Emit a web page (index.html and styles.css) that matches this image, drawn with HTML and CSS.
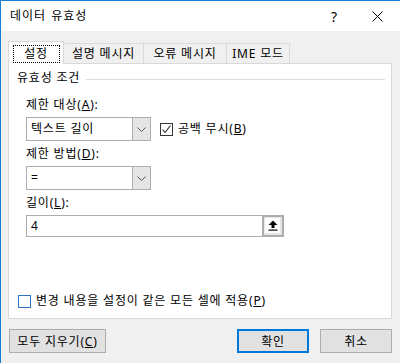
FILE: index.html
```html
<!DOCTYPE html>
<html lang="ko">
  <head>
    <meta charset="UTF-8" />
    <title>데이터 유효성</title>
    <meta name="viewport" content="width=device-width, initial-scale=1.0" />
    <link rel="stylesheet" href="styles.css">
  </head>
  <body>
    <div class="dialog">
      <div class="titlebar">
        <div class="title">데이터 유효성</div>
        <div class="help">?</div>
        <div class="close">
          <svg width="11" height="11" viewBox="0 0 11 11">
            <path d="M0.5 0.5 L10.5 10.5 M10.5 0.5 L0.5 10.5" stroke="#000" stroke-width="1" fill="none" />
          </svg>
        </div>
      </div>

      <div class="body">
        <div class="tabs">
          <div class="tab active"><span class="focus">설정</span></div>
          <div class="tab tab-help">설명 메시지</div>
          <div class="tab tab-error">오류 메시지</div>
          <div class="tab tab-ime">IME 모드</div>
        </div>

        <div class="panel">
          <div class="group-title">
            <span>유효성 조건</span>
            <div class="group-line"></div>
          </div>

          <div class="fields">
            <div class="label">제한 대상(<u>A</u>):</div>
            <div class="row">
              <div class="combo">
                <div class="combo-value">텍스트 길이</div>
                <div class="combo-btn">
                  <svg width="9" height="5" viewBox="0 0 9 5">
                    <path d="M0.5 0.5 L4.5 4.5 L8.5 0.5" stroke="#555" stroke-width="1" fill="none" />
                  </svg>
                </div>
              </div>
              <label class="check">
                <span class="box">
                  <svg width="11" height="11" viewBox="0 0 11 11">
                    <path d="M1.5 5.5 L4 8.5 L9.5 1.5" stroke="#222" stroke-width="1.1" fill="none" />
                  </svg>
                </span>
                공백 무시(<u>B</u>)
              </label>
            </div>

            <div class="label">제한 방법(<u>D</u>):</div>
            <div class="combo">
              <div class="combo-value">=</div>
              <div class="combo-btn">
                <svg width="9" height="5" viewBox="0 0 9 5">
                  <path d="M0.5 0.5 L4.5 4.5 L8.5 0.5" stroke="#555" stroke-width="1" fill="none" />
                </svg>
              </div>
            </div>

            <div class="label">길이(<u>L</u>):</div>
            <div class="ref-input">
              <div class="ref-value">4</div>
              <div class="ref-btn">
                <span class="ref-inner">
                  <svg width="10" height="11" viewBox="0 0 10 11">
                    <path d="M5 0.5 L9.5 5 L6.5 5 L6.5 8 L3.5 8 L3.5 5 L0.5 5 Z" fill="#000" />
                    <rect x="0.5" y="9.5" width="9" height="1.2" fill="#000" />
                  </svg>
                </span>
              </div>
            </div>
          </div>

          <label class="check apply">
            <span class="box blue"></span>
            변경 내용을 설정이 같은 모든 셀에 적용(<u>P</u>)
          </label>
        </div>

        <div class="buttons">
          <button class="btn clear-btn">모두 지우기(<u>C</u>)</button>
          <div class="spacer"></div>
          <button class="btn ok-btn">확인</button>
          <button class="btn">취소</button>
        </div>
      </div>
    </div>
  </body>
</html>
```

FILE: styles.css
```css
body {
  margin: 0;
  font-family: "Noto Sans", "Noto Sans CJK KR", sans-serif;
  font-size: 12px;
  letter-spacing: 0.8px;
  color: #000;
  background-color: #f0f0f0;
}
.dialog {
  width: 400px;
  height: 363px;
  box-sizing: border-box;
  border-top: 1px solid #1a7fd4;
  border-left: 1px solid #1a7fd4;
  display: flex;
  flex-direction: column;
  background-color: #f0f0f0;
  overflow: hidden;
}
.titlebar {
  height: 30px;
  background-color: #fff;
  display: flex;
  align-items: center;
  padding-left: 9px;
}
.title {
  flex: 1;
  line-height: 16px;
  letter-spacing: 1px;
  word-spacing: 1px;
}
.help {
  font-size: 14px;
  width: 10px;
  margin-right: 31px;
}
.close {
  width: 11px;
  height: 11px;
  margin-right: 17px;
  margin-top: 1px;
}
.close svg {
  display: block;
}
.body {
  flex: 1;
  padding: 10px 8px 0 7px;
  display: flex;
  flex-direction: column;
}
.tabs {
  display: flex;
  align-items: flex-end;
  height: 22px;
  position: relative;
  z-index: 1;
}
.tab {
  height: 20px;
  box-sizing: border-box;
  border: 1px solid #d9d9d9;
  border-bottom: none;
  margin-left: -1px;
  display: flex;
  align-items: center;
  justify-content: center;
  line-height: 16px;
  background-color: #f0f0f0;
}
.tab.active {
  height: 23px;
  width: 56px;
  margin-left: 0;
  background-color: #fff;
  margin-bottom: -1px;
}
.tab .focus {
  display: flex;
  align-items: center;
  justify-content: center;
  width: 47px;
  height: 18px;
  border: 1px dotted #000;
  box-sizing: border-box;
  margin-top: 1px;
}
.tab-help {
  width: 81px;
}
.tab-error {
  width: 84px;
}
.tab-ime {
  width: 64px;
}
.panel {
  height: 256px;
  box-sizing: border-box;
  background-color: #fff;
  border: 1px solid #d9d9d9;
  padding: 6px 6px 9px 8px;
  display: flex;
  flex-direction: column;
}
.group-title {
  display: flex;
  align-items: center;
  line-height: 16px;
}
.group-line {
  flex: 1;
  height: 1px;
  background-color: #dcdcdc;
  margin-left: 6px;
  margin-top: 2px;
}
.fields {
  padding-left: 9px;
  margin-top: 11px;
}
.label {
  line-height: 16px;
  margin-bottom: 4px;
}
.row {
  display: flex;
  align-items: center;
}
.combo {
  width: 125px;
  height: 24px;
  box-sizing: border-box;
  border: 1px solid #adadad;
  display: flex;
  margin-bottom: 5px;
}
.combo-value {
  flex: 1;
  padding-left: 4px;
  line-height: 22px;
}
.combo-btn {
  width: 17px;
  border-left: 1px solid #adadad;
  background-color: #e5e5e5;
  display: flex;
  align-items: center;
  justify-content: center;
}
.combo-btn svg {
  display: block;
}
.check {
  display: flex;
  align-items: center;
  line-height: 16px;
}
.row .check {
  margin-left: 9px;
  margin-bottom: 5px;
}
.box {
  width: 13px;
  height: 13px;
  box-sizing: border-box;
  border: 1px solid #333;
  background-color: #fff;
  margin-right: 5px;
  display: flex;
  align-items: center;
  justify-content: center;
}
.box svg {
  display: block;
}
.box.blue {
  border-color: #2f73c4;
}
.ref-input {
  width: 258px;
  height: 22px;
  box-sizing: border-box;
  border: 1px solid #adadad;
  display: flex;
}
.ref-value {
  flex: 1;
  padding-left: 4px;
  line-height: 20px;
}
.ref-btn {
  width: 22px;
  height: 22px;
  margin: -1px -1px 0 0;
  box-sizing: border-box;
  border: 2px solid #adadad;
  background-color: #e5e5e5;
  display: flex;
  align-items: flex-start;
  justify-content: flex-start;
  padding: 1px;
}
.ref-inner {
  width: 15px;
  height: 15px;
  background-color: #fff;
  display: flex;
  align-items: center;
  justify-content: center;
}
.ref-inner svg {
  display: block;
}
.apply {
  margin-top: auto;
  margin-left: 1px;
}
.buttons {
  display: flex;
  margin-top: 10px;
  padding-left: 1px;
}
.spacer {
  flex: 1;
}
.btn {
  height: 24px;
  width: 72px;
  box-sizing: border-box;
  border: 1px solid #adadad;
  background-color: #e1e1e1;
  font-family: "Noto Sans", "Noto Sans CJK KR", sans-serif;
  font-size: 12px;
  letter-spacing: 0.8px;
  color: #000;
  padding: 0;
  margin-left: 11px;
}
.clear-btn {
  width: 97px;
  margin-left: 0;
}
.ok-btn {
  border: 2px solid #0078d7;
}
```
